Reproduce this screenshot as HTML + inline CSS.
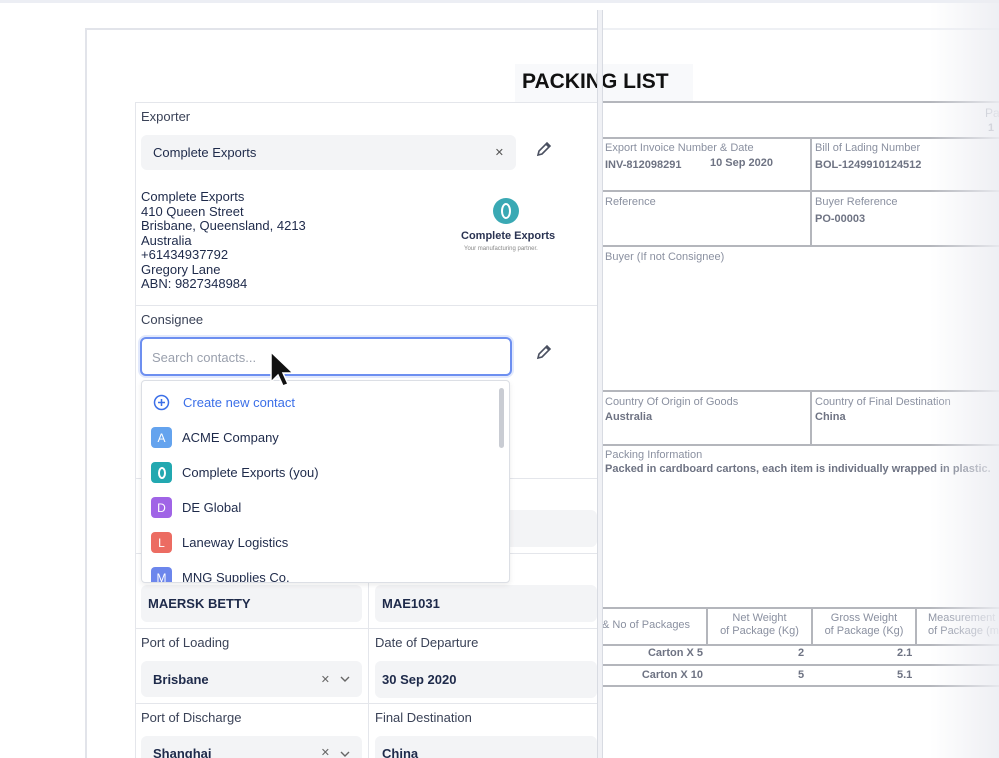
<!DOCTYPE html><html><head><style>
*{margin:0;padding:0;box-sizing:border-box}
html,body{width:999px;height:758px;overflow:hidden}
body{background:#fff;font-family:"Liberation Sans",sans-serif;position:relative}
.a{position:absolute}
.lbl{font-size:13px;color:#3a4257}
.inp{position:absolute;background:#f3f4f6;border-radius:6px;font-size:13px;color:#1e2a4a;font-weight:bold;padding-left:12px;display:flex;align-items:center}
.d{position:absolute;font-family:"Liberation Sans",sans-serif;color:#8a90a0;font-size:11px}
.db{position:absolute;color:#6e7383;font-size:11px;font-weight:bold}
.hl{position:absolute;height:2px;background:#b4b6bc}
.vl{position:absolute;width:2px;background:#b4b6bc}
.it{position:absolute;left:151px;font-size:13px;color:#1e2a4a;display:flex;align-items:center;gap:10px}
.av{width:21px;height:21px;border-radius:4px;color:#fff;font-size:12px;display:flex;align-items:center;justify-content:center}
</style></head><body>
<div class="a" style="left:0;top:0;width:999px;height:3px;background:#eceef4"></div>
<div class="a" style="left:85px;top:28px;width:520px;height:730px;border-top:2px solid #e2e4ea;border-left:2px solid #e2e4ea"></div>
<div class="a" style="left:603px;top:28px;width:396px;height:2px;background:#eef0f4"></div>
<div class="a" style="left:515px;top:64px;width:178px;height:38px;background:#f8f9fb"></div>
<div class="a" style="left:522px;top:70px;font-size:21px;font-weight:bold;color:#111">PACKING LIST</div>
<div class="hl" style="left:603px;top:101px;width:396px"></div>
<div class="d" style="left:985px;top:106px;font-size:12px">Pa</div>
<div class="db" style="left:988px;top:122px">1</div>
<div class="hl" style="left:603px;top:137px;width:396px"></div>
<div class="d" style="left:605px;top:142px">Export Invoice Number &amp; Date</div>
<div class="db" style="left:605px;top:159px">INV-812098291</div>
<div class="db" style="left:710px;top:157px">10 Sep 2020</div>
<div class="vl" style="left:810px;top:137px;height:110px"></div>
<div class="d" style="left:815px;top:142px">Bill of Lading Number</div>
<div class="db" style="left:815px;top:159px">BOL-1249910124512</div>
<div class="hl" style="left:603px;top:190px;width:396px"></div>
<div class="d" style="left:605px;top:196px">Reference</div>
<div class="d" style="left:815px;top:196px">Buyer Reference</div>
<div class="db" style="left:815px;top:213px">PO-00003</div>
<div class="hl" style="left:603px;top:245px;width:396px"></div>
<div class="d" style="left:605px;top:251px">Buyer (If not Consignee)</div>
<div class="hl" style="left:603px;top:390px;width:396px"></div>
<div class="vl" style="left:810px;top:390px;height:55px"></div>
<div class="d" style="left:605px;top:396px">Country Of Origin of Goods</div>
<div class="db" style="left:605px;top:411px">Australia</div>
<div class="d" style="left:815px;top:396px">Country of Final Destination</div>
<div class="db" style="left:815px;top:411px">China</div>
<div class="hl" style="left:603px;top:444px;width:396px"></div>
<div class="d" style="left:605px;top:449px">Packing Information</div>
<div class="db" style="left:605px;top:463px">Packed in cardboard cartons, each item is individually wrapped in plastic.</div>
<div class="hl" style="left:603px;top:607px;width:396px"></div>
<div class="vl" style="left:706px;top:607px;height:38px"></div>
<div class="vl" style="left:811px;top:607px;height:38px"></div>
<div class="vl" style="left:915px;top:607px;height:38px"></div>
<div class="d" style="left:602px;top:619px">&amp; No of Packages</div>
<div class="d" style="left:708px;top:612px;width:103px;text-align:center;line-height:13px">Net Weight<br>of Package (Kg)</div>
<div class="d" style="left:813px;top:612px;width:102px;text-align:center;line-height:13px">Gross Weight<br>of Package (Kg)</div>
<div class="d" style="left:928px;top:612px;line-height:13px;white-space:nowrap">Measurement<br>of Package (m</div>
<div class="hl" style="left:603px;top:644px;width:396px"></div>
<div class="db" style="left:603px;top:647px;width:100px;text-align:right">Carton X 5</div>
<div class="db" style="left:798px;top:647px">2</div>
<div class="db" style="left:897px;top:647px">2.1</div>
<div class="hl" style="left:603px;top:664px;width:396px"></div>
<div class="db" style="left:603px;top:669px;width:100px;text-align:right">Carton X 10</div>
<div class="db" style="left:798px;top:669px">5</div>
<div class="db" style="left:897px;top:669px">5.1</div>
<div class="hl" style="left:603px;top:685px;width:396px"></div>
<div class="a" style="left:930px;top:0;width:69px;height:758px;background:linear-gradient(to right,rgba(240,241,245,0),rgba(236,237,242,.9))"></div>
<div class="a" style="left:597px;top:10px;width:6px;height:748px;background:#f0f1f5;border-left:1px solid #d8dbe2;border-right:1px solid #d8dbe2"></div>
<div class="a" style="left:135px;top:102px;width:462px;height:656px;border-top:1px solid #e4e6eb;border-left:1px solid #e4e6eb;background:#fff"></div>
<div class="a lbl" style="left:141px;top:109px">Exporter</div>
<div class="inp" style="left:141px;top:135px;width:375px;height:35px;font-weight:normal;font-size:13px">Complete Exports<span style="position:absolute;right:12px;color:#555;font-size:11px">✕</span></div>
<svg class="a" style="left:536px;top:141px" width="16" height="16" viewBox="0 0 16 16"><path d="M2 14l1-4 8-8 3 3-8 8z M10 3l3 3" fill="none" stroke="#4a5060" stroke-width="1.6"/></svg>
<div class="a" style="left:141px;top:190px;font-size:13px;color:#1e2a4a;line-height:14.5px">Complete Exports<br>410 Queen Street<br>Brisbane, Queensland, 4213<br>Australia<br>+61434937792<br>Gregory Lane<br>ABN: 9827348984</div>
<div class="a" style="left:493px;top:198px;width:26px;height:26px;border-radius:50%;background:#3aa9b4"></div>
<div class="a" style="left:501px;top:203px;width:10px;height:16px;border:2px solid #fff;border-radius:50%"></div>
<div class="a" style="left:461px;top:230px;font-size:11px;font-weight:bold;color:#2a3352">Complete Exports</div>
<div class="a" style="left:464px;top:246px;font-size:6px;color:#888">Your manufacturing partner.</div>
<div class="a" style="left:135px;top:305px;width:462px;height:1px;background:#e4e6eb"></div>
<div class="a lbl" style="left:141px;top:312px">Consignee</div>
<svg class="a" style="left:536px;top:344px" width="16" height="16" viewBox="0 0 16 16"><path d="M2 14l1-4 8-8 3 3-8 8z M10 3l3 3" fill="none" stroke="#4a5060" stroke-width="1.6"/></svg>
<div class="a" style="left:135px;top:478px;width:462px;height:1px;background:#e4e6eb"></div>
<div class="a" style="left:368px;top:478px;width:1px;height:280px;background:#e4e6eb"></div>
<div class="inp" style="left:375px;top:510px;width:222px;height:37px"></div>
<div class="a" style="left:135px;top:553px;width:462px;height:1px;background:#e4e6eb"></div>
<div class="inp" style="left:141px;top:585px;width:221px;height:37px;padding-left:7px">MAERSK BETTY</div>
<div class="inp" style="left:375px;top:585px;width:222px;height:37px;padding-left:7px">MAE1031</div>
<div class="a" style="left:135px;top:628px;width:462px;height:1px;background:#e4e6eb"></div>
<div class="a lbl" style="left:141px;top:635px">Port of Loading</div>
<div class="a lbl" style="left:375px;top:635px">Date of Departure</div>
<div class="inp" style="left:141px;top:661px;width:221px;height:36px">Brisbane<span style="position:absolute;right:32px;color:#666;font-size:11px;font-weight:normal">✕</span><svg style="position:absolute;right:12px;top:15px" width="10" height="6" viewBox="0 0 10 6"><path d="M1 1l4 4 4-4" fill="none" stroke="#666" stroke-width="1.4"/></svg></div>
<div class="inp" style="left:375px;top:661px;width:222px;height:37px;padding-left:7px">30 Sep 2020</div>
<div class="a" style="left:135px;top:703px;width:462px;height:1px;background:#e4e6eb"></div>
<div class="a lbl" style="left:141px;top:710px">Port of Discharge</div>
<div class="a lbl" style="left:375px;top:710px">Final Destination</div>
<div class="inp" style="left:141px;top:736px;width:221px;height:22px;border-radius:6px 6px 0 0;overflow:hidden;align-items:flex-start;padding-top:10px">Shanghai<span style="position:absolute;right:32px;top:10px;color:#666;font-size:11px;font-weight:normal">✕</span><svg style="position:absolute;right:12px;top:15px" width="10" height="6" viewBox="0 0 10 6"><path d="M1 1l4 4 4-4" fill="none" stroke="#666" stroke-width="1.4"/></svg></div>
<div class="inp" style="left:375px;top:736px;width:222px;height:22px;border-radius:6px 6px 0 0;overflow:hidden;padding-left:7px;align-items:flex-start;padding-top:10px">China</div>
<div class="a" style="left:140px;top:337px;width:372px;height:39px;border:2px solid #6d8ff0;border-radius:6px;background:#fff;box-shadow:0 0 0 2px #e2e9fc"></div>
<div class="a" style="left:152px;top:350px;font-size:13px;color:#9aa0ad">Search contacts...</div>
<div class="a" style="left:141px;top:380px;width:369px;height:203px;border:1px solid #dcdfe5;border-radius:4px;background:#fff;box-shadow:0 2px 6px rgba(0,0,0,.08);overflow:hidden">
<div class="a" style="left:357px;top:7px;width:5px;height:60px;border-radius:3px;background:#c9ccd3"></div>
</div>
<svg class="a" style="left:153px;top:394px" width="17" height="17" viewBox="0 0 17 17"><circle cx="8.5" cy="8.5" r="7" fill="none" stroke="#3b6fe8" stroke-width="1.5"/><path d="M8.5 5v7M5 8.5h7" stroke="#3b6fe8" stroke-width="1.5"/></svg>
<div class="a" style="left:183px;top:395px;font-size:13px;color:#3b6fe8">Create new contact</div>
<div class="it" style="top:427px"><div class="av" style="background:#64a3ee">A</div>ACME Company</div>
<div class="it" style="top:462px"><div class="av" style="background:#22a8b0"><div style="width:8px;height:12px;border:2px solid #fff;border-radius:50%"></div></div>Complete Exports (you)</div>
<div class="it" style="top:497px"><div class="av" style="background:#a064e6">D</div>DE Global</div>
<div class="it" style="top:532px"><div class="av" style="background:#ec6c62">L</div>Laneway Logistics</div>
<div class="a" style="left:142px;top:565px;width:366px;height:17px;overflow:hidden"><div class="it" style="left:9px;top:2px"><div class="av" style="background:#6c86ec">M</div>MNG Supplies Co.</div></div>
<svg class="a" style="left:269px;top:350px" width="26" height="40" viewBox="0 0 26 40"><path d="M2 2v30l7-7 5 11 5-2-5-11h10z" fill="#111" stroke="#fff" stroke-width="1.5"/></svg>
</body></html>
